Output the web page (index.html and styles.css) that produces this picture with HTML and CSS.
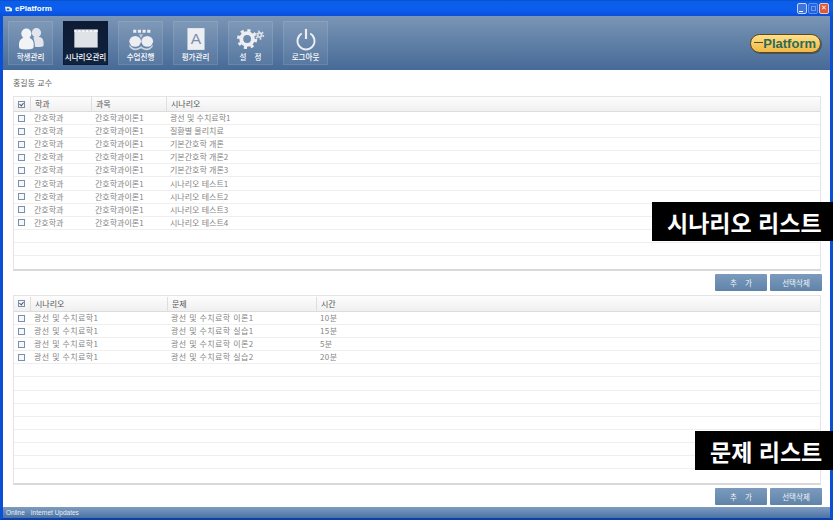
FILE: index.html
```html
<!DOCTYPE html>
<html lang="ko">
<head>
  <meta charset="utf-8">
  <title>ePlatform</title>
  <link rel="stylesheet" href="styles.css">
</head>
<body>
<div class="window">
  <!-- 타이틀바 -->
  <div class="titlebar">
    <svg class="app-icon" viewBox="0 0 8 8"><path d="M0 2h5l3 2v3H1z" fill="#e8eef6"/><path d="M2 4h3v2H2z" fill="#24509a"/></svg>
    <span class="app-name">ePlatform</span>
    <div class="win-btns">
      <span class="win-btn"><i class="min"></i></span>
      <span class="win-btn off"><i class="max"></i></span>
      <span class="win-btn close">✕</span>
    </div>
  </div>

  <!-- 상단 메뉴 -->
  <div class="topbar">
    <nav class="menu">
      <a class="menu-item">
        <svg viewBox="0 0 36 30"><circle cx="12" cy="8" r="6.5" fill="#f1f3f6"/><circle cx="25" cy="7" r="6" fill="#e2e5eb"/><path d="M3 27c-2-10 2-14 9-14s11 4 9 14c-4 2-14 2-18 0z" fill="#f1f3f6"/><path d="M21 13c2-1 3-1 5-1 7 0 9 4 8 12-2 1-6 2-11 1 0-5-1-9-2-12z" fill="#e2e5eb"/></svg>
        <span>학생관리</span>
      </a>
      <a class="menu-item active">
        <svg viewBox="0 0 36 30"><path d="M3 3h30v23H3z" fill="#dfe2e6"/><path d="M3 3h30v3H3z" fill="#f5f6f8"/><path d="M6 4h2v1H6zM11 4h2v1h-2zM16 4h2v1h-2zM21 4h2v1h-2zM26 4h2v1h-2z" fill="#8e96a5"/></svg>
        <span>시나리오관리</span>
      </a>
      <a class="menu-item">
        <svg viewBox="0 0 36 30"><path d="M8 3h4v4H8zM14 3h4v4h-4zM20 3h4v4h-4zM26 3h4v4h-4z" fill="#eceef2"/><ellipse cx="10.500" cy="18" rx="7.500" ry="7" fill="#eceef2"/><ellipse cx="26" cy="18" rx="7.500" ry="7" fill="#eceef2"/><path d="M15 9h6l-3 5z" fill="#b8c2d2"/><path d="M3 22c5 7 11 6 15 2 4 4 11 5 15-2v3c-4 6-11 5-15 2-4 3-11 4-15-2z" fill="#cfd5de"/></svg>
        <span>수업진행</span>
      </a>
      <a class="menu-item">
        <svg viewBox="0 0 36 30"><path d="M7 1h22v28H7z" fill="#eceef2"/><text x="18" y="21" class="grade-a">A</text></svg>
        <span>평가관리</span>
      </a>
      <a class="menu-item">
        <svg viewBox="0 0 36 30"><circle cx="13" cy="15" r="7.500" fill="none" stroke="#eceef2" stroke-width="5"/><circle cx="13" cy="15" r="11" fill="none" stroke="#eceef2" stroke-width="4" stroke-dasharray="4 4.64"/><circle cx="29" cy="10" r="2.600" fill="none" stroke="#dcdfe5" stroke-width="2.500"/><circle cx="29" cy="10" r="5" fill="none" stroke="#dcdfe5" stroke-width="2" stroke-dasharray="2.300 2.940"/></svg>
        <span class="wide">설 정</span>
      </a>
      <a class="menu-item">
        <svg viewBox="0 0 36 30"><path d="M12.500 8a11 11 0 1 0 11 0" fill="none" stroke="#eceef2" stroke-width="2.400"/><path d="M18 2v13" stroke="#eceef2" stroke-width="2.800"/></svg>
        <span>로그아웃</span>
      </a>
    </nav>
    <div class="logo"><i></i><span>Platform</span></div>
  </div>

  <!-- 본문 -->
  <div class="content">
    <div class="user-name">홍길동 교수</div>

    <div class="list list-scenario">
      <div class="row head">
        <span class="chk on"></span><span>학과</span><span>과목</span><span>시나리오</span>
      </div>
      <div class="row"><span class="chk"></span><span>간호학과</span><span>간호학과이론1</span><span>광선 및 수치료학1</span></div>
      <div class="row"><span class="chk"></span><span>간호학과</span><span>간호학과이론1</span><span>질환별 물리치료</span></div>
      <div class="row"><span class="chk"></span><span>간호학과</span><span>간호학과이론1</span><span>기본간호학 개론</span></div>
      <div class="row"><span class="chk"></span><span>간호학과</span><span>간호학과이론1</span><span>기본간호학 개론2</span></div>
      <div class="row"><span class="chk"></span><span>간호학과</span><span>간호학과이론1</span><span>기본간호학 개론3</span></div>
      <div class="row"><span class="chk"></span><span>간호학과</span><span>간호학과이론1</span><span>시나리오 테스트1</span></div>
      <div class="row"><span class="chk"></span><span>간호학과</span><span>간호학과이론1</span><span>시나리오 테스트2</span></div>
      <div class="row"><span class="chk"></span><span>간호학과</span><span>간호학과이론1</span><span>시나리오 테스트3</span></div>
      <div class="row"><span class="chk"></span><span>간호학과</span><span>간호학과이론1</span><span>시나리오 테스트4</span></div>
      <div class="row"></div>
      <div class="row"></div>
      <div class="row"></div>
    </div>
    <div class="actions">
      <button type="button" class="wide">추 가</button>
      <button type="button">선택삭제</button>
    </div>

    <div class="list list-problem">
      <div class="row head">
        <span class="chk on"></span><span>시나리오</span><span>문제</span><span>시간</span>
      </div>
      <div class="row"><span class="chk"></span><span>광선 및 수치료학1</span><span>광선 및 수치료학 이론1</span><span>10분</span></div>
      <div class="row"><span class="chk"></span><span>광선 및 수치료학1</span><span>광선 및 수치료학 실습1</span><span>15분</span></div>
      <div class="row"><span class="chk"></span><span>광선 및 수치료학1</span><span>광선 및 수치료학 이론2</span><span>5분</span></div>
      <div class="row"><span class="chk"></span><span>광선 및 수치료학1</span><span>광선 및 수치료학 실습2</span><span>20분</span></div>
      <div class="row"></div>
      <div class="row"></div>
      <div class="row"></div>
      <div class="row"></div>
      <div class="row"></div>
      <div class="row"></div>
      <div class="row"></div>
      <div class="row"></div>
      <div class="row"></div>
    </div>
    <div class="actions">
      <button type="button" class="wide">추 가</button>
      <button type="button">선택삭제</button>
    </div>
  </div>

  <!-- 상태바 -->
  <div class="statusbar">
    <span>Online</span><span>Internet Updates</span>
  </div>

  <!-- 설명 라벨 -->
  <div class="callout callout-scenario">시나리오 리스트</div>
  <div class="callout callout-problem">문제 리스트</div>
</div>
</body>
</html>
```

FILE: styles.css
```css
*{box-sizing:border-box;}
html,body{margin:0;height:100%;overflow:hidden;}
body{
  font-family:"Noto Sans CJK KR","Noto Sans",sans-serif;
  font-size:8px;
  color:#858585;
  background:#fff;
}
.window{
  position:relative;
  width:833px;
  height:520px;
  display:flex;
  flex-direction:column;
  border:solid #0a4fd6;
  border-width:1px 3px 2px 3px;
  border-bottom-color:#0c3fa8;
  background:#fff;
}
.wide{word-spacing:6px;}

/* 타이틀바 */
.titlebar{
  height:15px;
  flex:none;
  display:flex;
  align-items:center;
  gap:3px;
  margin:0 -3px;
  padding:0 4px 0 5px;
  background:linear-gradient(#0a5fe4,#0b5cf0 60%,#0a4fd6);
}
.app-icon{width:7px;height:7px;}
.app-name{font-family:"Liberation Sans",sans-serif;font-size:8px;font-weight:bold;color:#fff;}
.win-btns{margin-left:auto;display:flex;gap:1px;}
.win-btn{
  width:10px;height:11px;
  display:flex;align-items:center;justify-content:center;
  border:1px solid #c6d4f2;border-radius:2px;
  background:#3f74dd;
  color:#fff;font-size:7px;line-height:1;
  font-family:"DejaVu Sans",sans-serif;
}
.win-btn.off{opacity:.45;}
.win-btn.close{background:#e0583a;border-color:#f3c7b8;font-weight:bold;}
.win-btn .min{width:4px;height:1px;background:#fff;margin:5px 3px 0 0;}
.win-btn .max{width:5px;height:5px;border:1px solid #dfe8fa;}

/* 상단 메뉴 */
.topbar{
  height:54px;
  flex:none;
  display:flex;
  align-items:center;
  justify-content:space-between;
  padding:0 9px 0 5px;
  background:linear-gradient(#7a95b5,#466a97);
}
.menu{display:flex;gap:10px;}
.menu-item{
  width:45px;
  height:44px;
  display:flex;
  flex-direction:column;
  align-items:center;
  justify-content:space-between;
  padding:5px 0 3px;
  border:1px solid rgba(255,255,255,.1);
  background:rgba(255,255,255,.07);
  color:#fff;
  font-size:7.5px;
  line-height:9px;
  font-weight:500;
  white-space:nowrap;
}
.menu-item svg{width:28px;height:24px;}
.menu-item.active{
  background:linear-gradient(#0d1a33,#10233f);
  border-color:#0d1a33;
}
.grade-a{
  font-family:"Liberation Sans",sans-serif;
  font-size:20px;
  fill:#7b8eb0;
  text-anchor:middle;
}
.logo{
  position:relative;
  width:71px;
  height:19px;
  display:flex;
  align-items:center;
  justify-content:flex-end;
  padding-right:4px;
  border:1px solid #5a4a1c;
  border-radius:10px;
  background:linear-gradient(#ffe08a,#f0b845);
  box-shadow:1px 1px 0 rgba(40,40,40,.45);
  font-family:"Liberation Sans",sans-serif;
  font-size:13px;
  font-weight:bold;
  color:#2f6a55;
}
.logo i{
  position:absolute;
  left:3px;
  top:7px;
  width:9px;
  height:1px;
  background:#5a4a1c;
}

/* 본문 */
.content{
  flex:1;
  display:flex;
  flex-direction:column;
  padding:0 9px 0 10px;
  min-height:0;
}
.user-name{
  height:26px;
  flex:none;
  padding:3px 0 0;
  line-height:20px;
  color:#666;
}
.list{
  flex:none;
  border:1px solid #e4e4e4;
  border-bottom:2px solid #d8d8d8;
  display:flex;
  flex-direction:column;
}
.list-scenario{height:175px;}
.list-problem{height:190px;letter-spacing:.4px;}
.row{
  display:grid;
  align-items:center;
  height:13.1px;
  flex:none;
  border-bottom:1px solid #efefef;
  line-height:12px;
  white-space:nowrap;
}
.row:last-child{border-bottom:0;}
.list-scenario .row{grid-template-columns:16px 61px 75px 1fr;}
.list-problem .row{grid-template-columns:16px 137px 149px 1fr;}
.row span{padding-left:4px;}
.row.head{
  height:15px;
  background:linear-gradient(#fdfdfd,#f0f0f0);
  border-bottom:1px solid #dcdcdc;
  color:#555;
  letter-spacing:0;
}
.list-problem .row.head{height:16px;}
.row.head span:not(.chk){
  border-left:1px solid #dedede;
  height:14px;
  line-height:14px;
}
.row .chk{
  width:7px;
  height:7px;
  padding:0;
  margin-left:4px;
  border:1px solid #7c8fa8;
  background:#f4f7fb;
  position:relative;
}
.row .chk.on::after{
  content:"";
  position:absolute;
  left:1px;top:0;
  width:2px;height:3px;
  border:solid #556;
  border-width:0 1px 1px 0;
  transform:rotate(40deg);
}
.actions{
  flex:none;
  display:flex;
  justify-content:flex-end;
  gap:3px;
  height:24px;
  padding-top:3px;
  margin-right:-1px;
}
.actions button{
  width:52px;
  height:17px;
  padding:0;
  border:0;
  border-radius:1px;
  background:linear-gradient(#7b9bbd,#5f83a8);
  color:#eef3f8;
  font-family:inherit;
  font-size:7.5px;
  line-height:1;
}

/* 상태바 */
.statusbar{
  height:11px;
  flex:none;
  display:flex;
  align-items:center;
  gap:6px;
  padding-left:3px;
  background:linear-gradient(#7e9cc0,#4b72a5);
  color:#e8eef6;
  font-family:"Liberation Sans",sans-serif;
  font-size:6.5px;
}

/* 설명 라벨 (화면 위에 덧붙임) */
.callout{
  position:absolute;
  right:-3px;
  height:39px;
  display:flex;
  align-items:center;
  padding:0 13px 0 15px;
  background:#000;
  color:#fff;
  font-size:23px;
  font-weight:700;
  white-space:nowrap;
}
.callout-scenario{top:201px;width:181px;}
.callout-problem{top:430px;width:138px;}
```
